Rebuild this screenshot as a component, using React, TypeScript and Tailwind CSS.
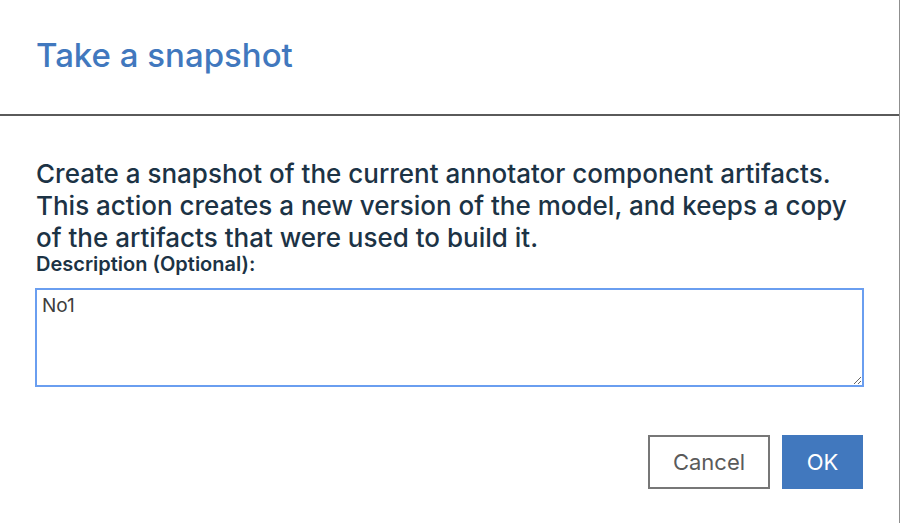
import { useState } from 'react';

export default function App() {
  const [desc, setDesc] = useState<string>('No1');

  return (
    <div className="w-[900px] h-[523px] bg-white border-r border-[#8f8f8f] font-['Inter',sans-serif] overflow-hidden">
      {/* Header */}
      <div className="h-[116px] pl-9 flex items-center border-b-2 border-[#5a5a5a]">
        <h1 className="text-[33px] text-[#4178be] font-medium -mt-[2px]">Take a snapshot</h1>
      </div>

      {/* Body */}
      <div className="px-9 pt-[42px]">
        <p className="text-[26px] leading-[32px] font-medium text-[#1c3345]">
          Create a snapshot of the current annotator component artifacts.
          <br />
          This action creates a new version of the model, and keeps a copy
          <br />
          of the artifacts that were used to build it.
        </p>
        <label className="block text-[20px] leading-[20px] font-semibold text-[#1c3345]">
          Description (Optional):
        </label>
        <textarea
          className="mt-[14px] -ml-px w-[829px] h-[99px] border-2 border-[#6a9ef0] px-[5px] py-[2px] text-[19px] text-[#3d3d3d] outline-none block"
          value={desc}
          onChange={(e) => setDesc(e.target.value)}
        />
      </div>

      {/* Footer */}
      <div className="flex justify-end gap-3 pr-[36px] mt-[48px]">
        <button className="w-[122px] h-[54px] border-2 border-[#777777] text-[22px] text-[#5a5a5a] bg-white">
          Cancel
        </button>
        <button className="w-[81px] h-[54px] bg-[#4178be] text-[22px] text-white">
          OK
        </button>
      </div>
    </div>
  );
}
